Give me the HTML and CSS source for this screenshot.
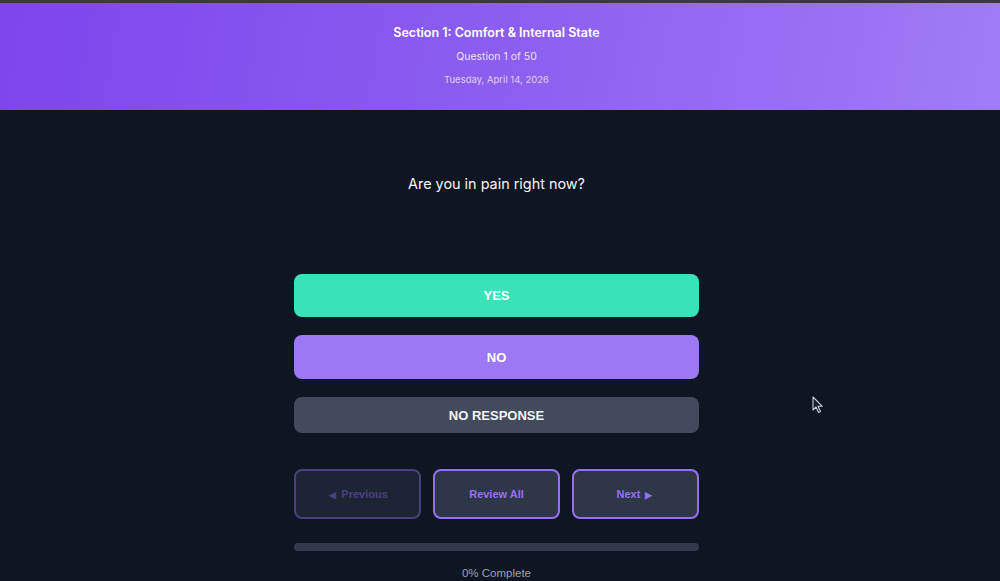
FILE: index.html
```html
<!DOCTYPE html>
<html lang="en">
<head>
<meta charset="utf-8">
<title>Assessment – Question 1</title>
<link rel="stylesheet" href="styles.css">
</head>
<body>
<div class="topline"></div>
<header class="hero">
  <h1 class="hero-title">Section 1: Comfort &amp; Internal State</h1>
  <p class="hero-count">Question 1 of 50</p>
  <p class="hero-date">Tuesday, April 14, 2026</p>
</header>
<main class="stage">
  <h2 class="question">Are you in pain right now?</h2>
  <div class="answers">
    <button class="answer answer-yes">YES</button>
    <button class="answer answer-no">NO</button>
    <button class="answer answer-none">NO RESPONSE</button>
  </div>
  <nav class="nav">
    <button class="nav-btn nav-disabled"><span class="arrow">◀</span> Previous</button>
    <button class="nav-btn">Review All</button>
    <button class="nav-btn">Next <span class="arrow">▶</span></button>
  </nav>
  <div class="progress"><div class="progress-fill" style="width:0%"></div></div>
  <p class="progress-label">0% Complete</p>
</main>
<svg class="cursor" width="12" height="18" viewBox="0 0 12 18">
  <path d="M1 1 L1 14 L4 11 L6.5 16.5 L8.5 15.6 L6 10.2 L10.2 10.2 Z" fill="#1a1f29" stroke="#c9ccd2" stroke-width="1.1" stroke-linejoin="round"/>
</svg>
</body>
</html>
```
FILE: styles.css
```css
* { box-sizing: border-box; }
html, body { margin: 0; padding: 0; }
body {
  background: #0f1623;
  height: 581px;
  overflow: hidden;
  font-family: Inter, "Noto Sans", sans-serif;
  position: relative;
}
.topline { height: 3px; background: #3b3744; }
.hero {
  height: 107px;
  background: linear-gradient(100deg, #7e45ec 0%, #8c5ef0 50%, #a07cf6 100%);
  display: flex;
  flex-direction: column;
  align-items: center;
  padding: 22px 7px 0 0;
  color: #fff;
}
.hero-title { margin: 0; font-size: 12.5px; font-weight: 600; line-height: 16px; }
.hero-count { margin: 9px 0 0; font-size: 10.5px; line-height: 14px; color: rgba(255,255,255,0.85); }
.hero-date { margin: 9px 0 0; font-size: 9.5px; line-height: 13px; color: rgba(255,255,255,0.72); }
.stage {
  width: 405px;
  margin: 0 auto;
  position: relative;
  left: -3.5px;
  display: flex;
  flex-direction: column;
}
.question {
  margin: 64px 0 0;
  text-align: center;
  color: #f3f4f6;
  font-size: 14.4px;
  font-weight: 400;
  line-height: 20px;
}
.answers { display: flex; flex-direction: column; gap: 18px; margin-top: 80px; }
.answer {
  border: none;
  border-radius: 8px;
  color: #fff;
  font-family: "Liberation Sans", Arial, sans-serif;
  font-weight: 700;
  font-size: 13px;
  height: 44px;
  padding: 0;
}
.answer-yes { background: #3ae2b8; height: 43px; }
.answer-no { background: #9d78f5; }
.answer-none { background: #414b5c; height: 36px; color: #f1f3f6; }
.nav { display: grid; grid-template-columns: repeat(3, 1fr); gap: 12px; margin-top: 36px; }
.nav-btn {
  height: 50px;
  border: 2px solid #9870ef;
  border-radius: 8px;
  background: #2e3748;
  color: #9870ef;
  font-family: "Liberation Sans", Arial, sans-serif;
  font-weight: 700;
  font-size: 11px;
  padding: 0;
}
.arrow { font-size: 9px; margin: 0 2px; }
.nav-disabled { opacity: 0.45; }
.progress { height: 8px; border-radius: 4px; background: #313a4a; margin-top: 24px; overflow: hidden; }
.progress-fill { height: 100%; background: #8b5cf6; }
.progress-label {
  margin: 15px 0 0;
  text-align: center;
  color: #9aa2af;
  font-family: "Liberation Sans", Arial, sans-serif;
  font-size: 11.5px;
  line-height: 14px;
}
.cursor { position: absolute; left: 812px; top: 396px; }
```
